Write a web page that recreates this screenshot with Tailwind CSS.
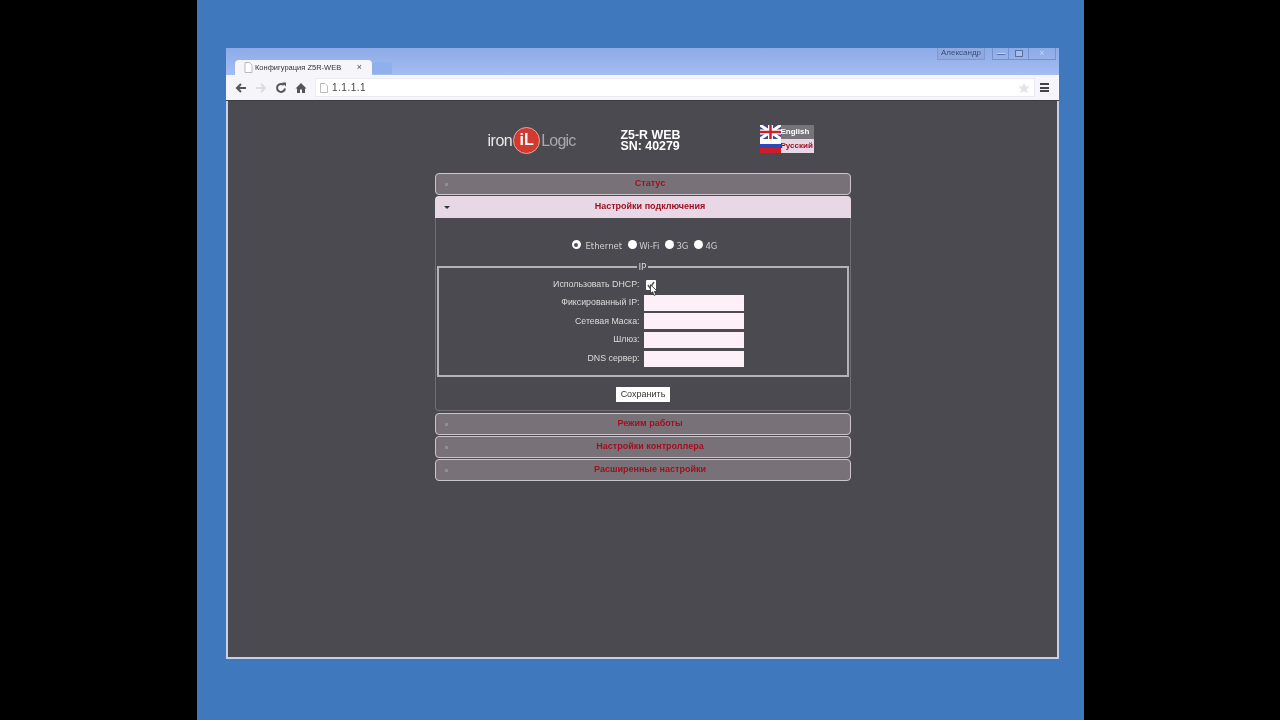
<!DOCTYPE html>
<html lang="ru">
<head>
    <meta charset="UTF-8">
    <title>Конфигурация Z5R-WEB</title>
    <script src="https://cdn.jsdelivr.net/npm/@tailwindcss/browser@4"></script>
</head>
<body class="h-[720px] w-[1280px] overflow-hidden bg-black font-['Liberation_Sans',sans-serif]">
    <div class="flex h-full">
        <div class="w-[197px] bg-black"></div>
        <div class="w-[887px] h-full bg-[#3f78bd] pl-[29px] pt-[48px]">
            <!-- browser window -->
            <div class="w-[833px] h-[611px] flex flex-col border-2 border-t-0 border-[#c5d0ee] bg-[#4b4a50] relative blur-[0.4px]">
                <!-- title bar -->
                <div class="h-[27px] -mx-[2px] bg-gradient-to-b from-[#8dabe6] to-[#a5bdf3] flex pl-[8px] relative">
                    <div class="mt-[12px] h-[15px] w-[137px] ml-[1px] bg-[#f6f5fa] rounded-t-[4px] flex items-center pl-[9px] pr-[10px] text-[7.500px] text-[#333]">
                        <svg class="w-[9px] h-[11px] mr-[2px]" viewBox="0 0 9 11"><path d="M1 .5h4.500L8 3v7.500H1z" fill="#fff" stroke="#bbb"/></svg>
                        <span>Конфигурация Z5R-WEB</span>
                        <span class="ml-auto text-[9px] text-[#555]">×</span>
                    </div>
                    <div class="mt-[14px] h-[12px] w-[20px] bg-[#8fb0ea] rounded-t-[3px]"></div>
                    <!-- window controls -->
                    <div class="absolute top-0 right-[3px] flex h-[12px] text-[8px] text-[#3a4f78]">
                        <div class="w-[48px] border border-t-0 border-[#7d99cf] bg-[#8fa9e0] text-center leading-[10px] mr-[7px]">Александр</div>
                        <div class="w-[17px] border border-t-0 border-[#7592cc] flex items-center justify-center"><div class="w-[8px] h-[2px] bg-[#c8d6f3] border-b border-[#5a70a0]"></div></div>
                        <div class="w-[20px] border border-t-0 border-l-0 border-[#7592cc] flex items-center justify-center"><div class="w-[8px] h-[7px] border border-[#5a70a0] bg-[#a9bfea]"></div></div>
                        <div class="w-[27px] border border-t-0 border-l-0 border-[#7592cc] text-center text-[9px] leading-[10px] text-[#c8d6f3]">×</div>
                    </div>
                </div>
                <!-- toolbar -->
                <div class="h-[26px] -mx-[2px] bg-[#f6f5fa] flex items-center pl-[9px] pr-[7px] border-b border-[#3d3c41]">
                    <svg class="w-[12px] h-[12px] mr-[8px]" viewBox="0 0 12 12"><path d="M11 6H3M6 2 2 6l4 4" fill="none" stroke="#555" stroke-width="2"/></svg>
                    <svg class="w-[12px] h-[12px] mr-[8px]" viewBox="0 0 12 12"><path d="M1 6h8M6 2l4 4-4 4" fill="none" stroke="#dcdcdc" stroke-width="2"/></svg>
                    <svg class="w-[12px] h-[12px] mr-[8px]" viewBox="0 0 12 12"><path d="M10 6.500A4 4 0 1 1 8.800 3" fill="none" stroke="#555" stroke-width="2"/><path d="M7 .5h4v4z" fill="#555"/></svg>
                    <svg class="w-[12px] h-[12px] mr-[8px]" viewBox="0 0 12 12"><path d="M6 1 .5 6.500H2V11h3V7.500h2V11h3V6.500h1.500z" fill="#555"/></svg>
                    <div class="h-[19px] w-[720px] bg-white flex items-center pl-[4px] text-[10px] text-[#444] tracking-[0.5px] border border-[#eceaf0]">
                        <svg class="w-[8px] h-[10px] mr-[4px]" viewBox="0 0 8 10"><path d="M.5.5h4.500L7.500 3v6.500H.5z" fill="#fff" stroke="#bbb"/></svg>
                        <span>1.1.1.1</span>
                        <svg class="ml-auto mr-[4px] w-[12px] h-[12px]" viewBox="0 0 12 12"><path d="m6 .5 1.700 3.700 4 .4-3 2.700.9 4L6 9.200 2.400 11.300l.9-4-3-2.700 4-.4z" fill="#e6e4ea"/></svg>
                    </div>
                    <div class="ml-auto w-[9px] h-[9px] flex flex-col justify-between mr-[3px]">
                        <div class="h-[2px] bg-[#444]"></div><div class="h-[2px] bg-[#444]"></div><div class="h-[2px] bg-[#444]"></div>
                    </div>
                </div>
                <!-- page -->
                <div class="flex-1 flex flex-col items-center">
                    <!-- page header -->
                    <div class="h-[72px] w-[416px] flex items-start pt-[24px] relative">
                        <div class="w-[186px] pl-[53px] flex items-center text-[16px] mt-[2px]">
                            <span class="text-[#e8e8e8] tracking-[-0.5px]">iron</span>
                            <span class="mx-[1px] w-[27px] h-[27px] shrink-0 rounded-full bg-[#d2392f] border border-[#e8a59f] text-white text-center text-[16px] leading-[24px] font-bold">iL</span>
                            <span class="text-[#a9a9ad] tracking-[-0.8px]">Logic</span>
                        </div>
                        <div class="text-white font-bold text-[12.400px] leading-[11px] pt-[5px]">Z5-R WEB<br>SN: 40279</div>
                        <div class="ml-auto mr-[37px] w-[54px] text-[8px] font-bold leading-[14px]">
                            <div class="flex h-[14px]">
                                <svg class="w-[21px] h-[14px]" viewBox="0 0 21 14"><rect width="21" height="14" fill="#3b4a8c"/><path d="M0 0l21 14M21 0L0 14" stroke="#fff" stroke-width="3"/><path d="M10.500 0v14M0 7h21" stroke="#fff" stroke-width="5"/><path d="M10.500 0v14M0 7h21" stroke="#c8202f" stroke-width="2.500"/></svg>
                                <div class="flex-1 bg-[#77757a] text-white">English</div>
                            </div>
                            <div class="flex h-[14px]">
                                <svg class="w-[21px] h-[14px]" viewBox="0 0 21 14"><rect width="21" height="5" fill="#fff"/><rect y="5" width="21" height="4" fill="#2d49b8"/><rect y="9" width="21" height="5" fill="#d01c28"/></svg>
                                <div class="flex-1 bg-[#e8d8e6] text-[#a01020]">Русский</div>
                            </div>
                        </div>
                    </div>
                    <!-- accordion -->
                    <div class="w-[416px] flex flex-col text-[8.800px]">
                        <div class="h-[22px] bg-[#787278] border border-[#c9c5cb] rounded-[4px] relative flex items-center justify-center text-[9px] font-bold text-[#a01020] pl-[15px]">
                            <span class="absolute left-[9px] top-[9px] w-[3px] h-[3px] bg-[#8f8d96]"></span>Статус
                        </div>
                        <div class="mt-[1px] h-[22px] bg-[#e8d8e6] rounded-t-[4px] relative flex items-center justify-center text-[9px] font-bold text-[#a01020] pl-[15px]">
                            <span class="absolute left-[9px] top-[10px] w-0 h-0 border-x-[3px] border-x-transparent border-t-[3px] border-t-[#333]"></span>Настройки подключения
                        </div>
                        <div class="h-[193px] border border-t-0 border-[#6f6e74] rounded-b-[4px] px-[1px] flex flex-col items-center text-[#dcdcdc]">
                            <!-- connection type -->
                            <div class="h-[48px] pt-[8px] flex items-center font-['DejaVu_Sans',sans-serif] text-[8.500px] text-[#cfcfcf] w-full pl-[135px]">
                                <span class="mb-[3px] w-[9px] h-[9px] rounded-full bg-white border-[2px] border-[#fff] flex items-center justify-center"><span class="w-[4px] h-[4px] rounded-full bg-[#555]"></span></span>
                                <span class="ml-[5px]">Ethernet</span>
                                <span class="mb-[3px] ml-[6px] w-[9px] h-[9px] rounded-full bg-white"></span>
                                <span class="ml-[2px]">Wi-Fi</span>
                                <span class="mb-[3px] ml-[6px] w-[9px] h-[9px] rounded-full bg-white"></span>
                                <span class="ml-[2px]">3G</span>
                                <span class="mb-[3px] ml-[6px] w-[9px] h-[9px] rounded-full bg-white"></span>
                                <span class="ml-[2px]">4G</span>
                            </div>
                            <!-- IP fieldset -->
                            <fieldset class="w-[412px] h-[113px] border-2 border-[#b4b4b6] -mt-[2px] flex flex-col">
                                <legend class="mx-auto px-[1px] text-[9px] leading-[6px] text-[#d8d8d8] font-['DejaVu_Sans',sans-serif]">IP</legend>
                                <div class="pt-[6px] flex flex-col gap-[2.700px] relative">
                                    <div class="h-[16px] pt-[2px] flex items-center"><label class="w-[201px] text-right">Использовать DHCP:</label>
                                        <span class="ml-[6px] w-[10px] h-[10px] bg-white rounded-[1px] flex items-center justify-center"><svg class="w-[8px] h-[8px]" viewBox="0 0 8 8"><path d="M1 4l2 3 4-6" fill="none" stroke="#555" stroke-width="1.500"/></svg></span>
                                    </div>
                                    <div class="h-[16px] flex items-center"><label class="w-[201px] text-right">Фиксированный IP:</label><input class="ml-[4px] w-[100px] h-[16px] bg-[#fdf0f8]"></div>
                                    <div class="h-[16px] flex items-center"><label class="w-[201px] text-right">Сетевая Маска:</label><input class="ml-[4px] w-[100px] h-[16px] bg-[#fdf0f8]"></div>
                                    <div class="h-[16px] flex items-center"><label class="w-[201px] text-right">Шлюз:</label><input class="ml-[4px] w-[100px] h-[16px] bg-[#fdf0f8]"></div>
                                    <div class="h-[16px] flex items-center"><label class="w-[201px] text-right">DNS сервер:</label><input class="ml-[4px] w-[100px] h-[16px] bg-[#fdf0f8]"></div>
                                    <!-- mouse cursor -->
                                    <svg class="absolute left-[211px] top-[14px] w-[8px] h-[13px]" viewBox="0 0 9 14"><path d="M.5.5v10l2.500-2 1.500 4 2-.8-1.500-3.700h3.500z" fill="#fff" stroke="#222" stroke-width=".9"/></svg>
                                </div>
                            </fieldset>
                            <button class="mt-[10px] ml-[1px] w-[54px] h-[15px] bg-white text-[#333] text-[9px] leading-[15px]">Сохранить</button>
                        </div>
                        <div class="mt-[2px] h-[22px] bg-[#787278] border border-[#c9c5cb] rounded-[4px] relative flex items-center justify-center text-[9px] font-bold text-[#a01020] pl-[15px]">
                            <span class="absolute left-[9px] top-[9px] w-[3px] h-[3px] bg-[#8f8d96]"></span>Режим работы
                        </div>
                        <div class="mt-[1px] h-[22px] bg-[#787278] border border-[#c9c5cb] rounded-[4px] relative flex items-center justify-center text-[9px] font-bold text-[#a01020] pl-[15px]">
                            <span class="absolute left-[9px] top-[9px] w-[3px] h-[3px] bg-[#8f8d96]"></span>Настройки контроллера
                        </div>
                        <div class="mt-[1px] h-[22px] bg-[#787278] border border-[#c9c5cb] rounded-[4px] relative flex items-center justify-center text-[9px] font-bold text-[#a01020] pl-[15px]">
                            <span class="absolute left-[9px] top-[9px] w-[3px] h-[3px] bg-[#8f8d96]"></span>Расширенные настройки
                        </div>
                    </div>
                </div>
            </div>
        </div>
        <div class="flex-1 bg-black"></div>
    </div>
</body>
</html>
